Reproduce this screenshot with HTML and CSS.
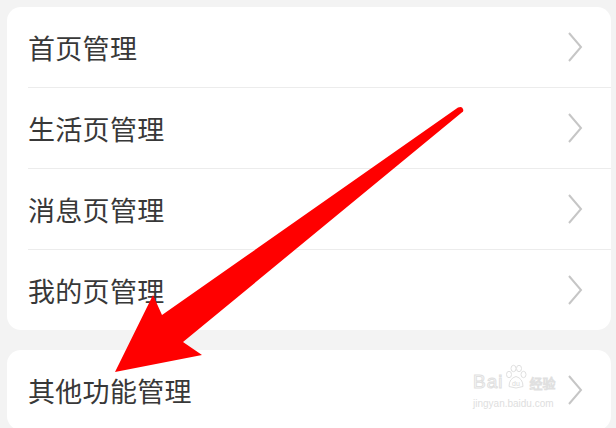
FILE: index.html
```html
<!DOCTYPE html>
<html lang="zh-CN">
<head>
    <meta charset="UTF-8">
    <meta name="viewport" content="width=device-width, initial-scale=1.0">
    <title>页面管理</title>
    <link rel="stylesheet" href="styles.css">
</head>
<body>
    <!-- Page settings list -->
    <div class="card">
        <div class="row"><span class="label">首页管理</span><svg class="chevron" viewBox="0 0 16 30"><path d="M2 1 L14 15 L2 29"/></svg></div>
        <div class="row"><span class="label">生活页管理</span><svg class="chevron" viewBox="0 0 16 30"><path d="M2 1 L14 15 L2 29"/></svg></div>
        <div class="row"><span class="label">消息页管理</span><svg class="chevron" viewBox="0 0 16 30"><path d="M2 1 L14 15 L2 29"/></svg></div>
        <div class="row"><span class="label">我的页管理</span><svg class="chevron" viewBox="0 0 16 30"><path d="M2 1 L14 15 L2 29"/></svg></div>
    </div>

    <div class="card last">
        <div class="row"><span class="label">其他功能管理</span><svg class="chevron" viewBox="0 0 16 30"><path d="M2 1 L14 15 L2 29"/></svg></div>
    </div>

    <!-- Watermark -->
    <div class="watermark">
        <div class="wm-top">
            <span class="wm-bai">Bai</span>
            <svg class="wm-paw" viewBox="0 0 22 26">
                <ellipse cx="4" cy="10" rx="2.5" ry="3.2"/>
                <ellipse cx="8.5" cy="4" rx="2.5" ry="3.2"/>
                <ellipse cx="14" cy="4" rx="2.5" ry="3.2"/>
                <ellipse cx="18.5" cy="10" rx="2.5" ry="3.2"/>
                <path d="M4 22 Q4 14 11 12 Q18 14 18 22 Q11 25 4 22 Z"/>
                <text x="11" y="21" text-anchor="middle">du</text>
            </svg>
            <span class="wm-jy">经验</span>
        </div>
        <div class="wm-url">jingyan.baidu.com</div>
    </div>

    <!-- Red arrow overlay -->
    <svg class="arrow" viewBox="0 0 616 428">
        <path d="M115 372 L153 295 L162 315 L458 107.6 Q462 106 463 109 Q464 111.5 461.8 112.4 L183 342 L202 355 Z"/>
    </svg>
</body>
</html>
```

FILE: styles.css
```css
html {
    overflow: hidden;
}
body {
    margin: 0;
    padding: 7px 5px 0 7px;
    background: #f3f3f3;
    font-family: "Noto Sans CJK SC", "Noto Sans", sans-serif;
    height: 428px;
    box-sizing: border-box;
    overflow: hidden;
    position: relative;
}
.card {
    background: #fff;
    border-radius: 14px;
    margin-bottom: 20px;
}
.card.last {
    margin-bottom: 0;
}
.row {
    height: 80px;
    margin-left: 21px;
    padding-right: 28px;
    display: flex;
    align-items: center;
    justify-content: space-between;
    border-bottom: 1px solid #ececec;
}
.row:last-child {
    border-bottom: none;
}
.label {
    font-size: 27px;
    color: #383838;
    letter-spacing: 0.3px;
}
.chevron {
    width: 16px;
    height: 30px;
    fill: none;
    stroke: #c6c6c6;
    stroke-width: 2;
}
.watermark {
    position: absolute;
    left: 473px;
    top: 361px;
    color: #e4e4e4;
    font-family: "Liberation Sans", sans-serif;
}
.wm-top {
    display: flex;
    align-items: flex-end;
    height: 30px;
}
.wm-bai {
    font-size: 19px;
    line-height: 18px;
    letter-spacing: 1px;
    -webkit-text-stroke: 1px #e0e0e0;
    color: #fff;
}
.wm-paw {
    width: 22px;
    height: 27px;
    margin: 0 2px;
    fill: #fff;
    stroke: #e0e0e0;
    stroke-width: 1;
}
.wm-paw text {
    font-size: 7px;
    stroke: none;
    fill: #dadada;
    font-family: "Liberation Sans", sans-serif;
}
.wm-jy {
    font-family: "Noto Sans CJK SC", sans-serif;
    font-size: 13px;
    line-height: 16px;
    color: #fff;
    -webkit-text-stroke: 1px #e0e0e0;
}
.wm-url {
    font-size: 10px;
    margin-top: 7px;
    color: #dedede;
}
.arrow {
    position: absolute;
    left: 0;
    top: 0;
    width: 616px;
    height: 428px;
    fill: #ff0000;
}
```
